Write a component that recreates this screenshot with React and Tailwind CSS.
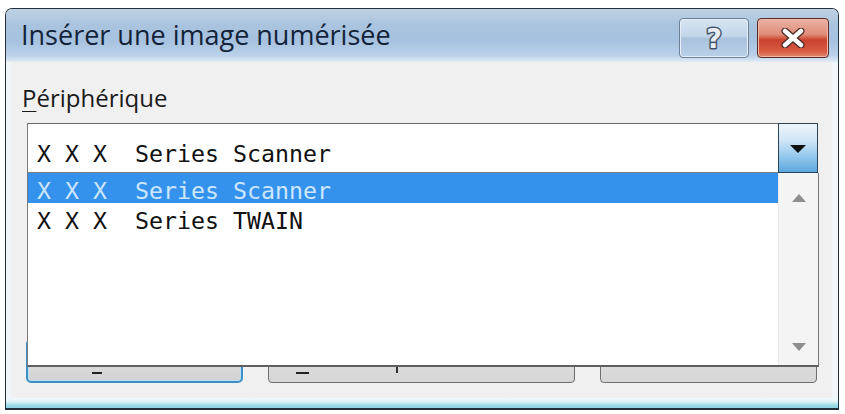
import React from "react";

function Tri({ up, className }) {
  return (
    <svg width="14" height="8" viewBox="0 0 14 8" className={className}>
      {up ? <polygon points="0,8 14,8 7,0" fill="#8e8e8e" /> : <polygon points="0,0 14,0 7,8" fill="#8e8e8e" />}
    </svg>
  );
}

export default function App() {
  const mono = "font-['DejaVu_Sans_Mono',monospace] text-[23.25px]";
  return (
    <div className="w-[845px] h-[414px] bg-white pt-[8px] pl-[5px] overflow-hidden font-['Open_Sans',sans-serif]">
      <div className="w-[834px] h-[402px] border border-b-2 border-[#22303d] rounded-t-[7px] flex flex-col overflow-hidden">
        {/* Title bar */}
        <div className="h-[53px] flex justify-between items-start bg-[linear-gradient(to_bottom,#bfd1e4_0%,#aac4df_30%,#a6c2e0_60%,#bbd1ea_88%,#e3ecf5_100%)]">
          <div className="pl-[15px] pt-[8px] text-[27px] leading-[36px] text-[#13243a]">
            Insérer une image numérisée
          </div>
          <div className="flex gap-[8px] pr-[9px] pt-[9px]">
            <div className="w-[70px] h-[40px] rounded-[4px] border border-[#6c8097] bg-[linear-gradient(to_bottom,#d6e4f1_0%,#c2d6ea_45%,#a9c2dc_52%,#b9d0e8_100%)] shadow-[inset_0_0_0_1px_#e6eef7] flex items-center justify-center">
              <svg width="24" height="30" viewBox="0 0 24 30">
                <text
                  x="12"
                  y="25"
                  textAnchor="middle"
                  fontFamily="DejaVu Sans, sans-serif"
                  fontWeight="bold"
                  fontSize="27"
                  fill="#e8edf3"
                  stroke="#45546a"
                  strokeWidth="3"
                  strokeLinejoin="round"
                  paintOrder="stroke"
                >
                  ?
                </text>
              </svg>
            </div>
            <div className="w-[72px] h-[40px] rounded-[4px] border border-[#5a2b24] bg-[linear-gradient(to_bottom,#eab1a3_0%,#df8e7b_40%,#c9432d_55%,#d65b42_85%,#e08a70_100%)] shadow-[inset_0_0_0_1px_#f0b8aa] flex items-center justify-center">
              <svg width="24" height="20" viewBox="0 0 24 20">
                <path d="M4 3 L20 17 M20 3 L4 17" stroke="#4a2a24" strokeWidth="7" strokeLinecap="round" />
                <path d="M4 3 L20 17 M20 3 L4 17" stroke="#ffffff" strokeWidth="4.5" strokeLinecap="round" />
              </svg>
            </div>
          </div>
        </div>
        {/* Middle */}
        <div className="h-[336px] flex">
          <div className="w-[5px] bg-[#f1f6fb]" />
          <div className="flex-1 bg-[#f0f0f0] flex flex-col">
            <div className="pl-[11px] pt-[20px] text-[24px] leading-[32px] text-[#1a1a1a]">
              <span className="underline decoration-1 underline-offset-[4px]">P</span>ériphérique
            </div>
            {/* Combobox */}
            <div className="ml-[16px] mt-[9px] w-[791px] relative">
              <div className="h-[50px] flex bg-white border-t border-l border-b border-[#7c7c7c] border-t-[#6a6a6a]">
                <div className={`flex-1 pl-[9px] pt-[15px] leading-[30px] text-[#111] whitespace-pre ${mono}`}>
                  X X X  Series Scanner
                </div>
                <div className="w-[40px] -mt-px -mb-px border-[1.5px] border-[#2d4457] bg-[linear-gradient(to_bottom,#eef5fb_0%,#cfe5f6_35%,#8fc6ec_70%,#5ea8de_100%)] flex justify-center pt-[21px]">
                  <svg width="16" height="8" viewBox="0 0 16 8">
                    <polygon points="0,0 16,0 8,8" fill="#111" />
                  </svg>
                </div>
              </div>
              {/* Dropdown list */}
              <div className="absolute left-0 top-[50px] w-[792px] h-[194px] z-10 bg-white border-l border-r border-b-2 border-[#7a7a7a] border-b-[#5f5f5f] flex">
                <div className={`flex-1 ${mono} whitespace-pre`}>
                  <div className="h-[30px] bg-[#3492ec] text-[#cde6ff] pl-[9px] pt-[3px] leading-[30px] overflow-hidden">X X X  Series Scanner</div>
                  <div className="h-[30px] text-[#111] pl-[9px] pt-[3px] leading-[30px] overflow-hidden">X X X  Series TWAIN</div>
                </div>
                <div className="w-[40px] bg-[#f4f4f4] border-l border-[#e8e8e8] flex flex-col items-center justify-between pt-[21px] pb-[14px]">
                  <Tri up />
                  <Tri />
                </div>
              </div>
            </div>
            {/* Buttons */}
            <div className="ml-[15px] mt-[166px] flex gap-[25px]">
              <div className="w-[217px] h-[44px] rounded-[5px] border-2 border-[#3d8fc4] bg-[linear-gradient(to_bottom,#e8e8e8,#d2d2d2)] shadow-[inset_0_0_0_1px_#b5e3f5]">
                <div className="ml-[64px] mt-[31px] w-[10px] h-[2px] bg-[#222]" />
              </div>
              <div className="w-[307px] h-[44px] rounded-[4px] border border-[#6f6f6f] bg-[linear-gradient(to_bottom,#e4e4e4,#d6d6d6)] flex items-start">
                <div className="ml-[27px] mt-[32px] w-[13px] h-[2px] bg-[#222]" />
                <div className="ml-[87px] mt-[27px] w-[2px] h-[6px] bg-[#333]" />
              </div>
              <div className="w-[217px] h-[44px] rounded-[4px] border border-[#6f6f6f] bg-[linear-gradient(to_bottom,#e4e4e4,#d6d6d6)]" />
            </div>
          </div>
          <div className="w-[6px] bg-[#f1f6fb]" />
        </div>
        {/* Bottom frame */}
        <div className="flex-1 bg-[linear-gradient(to_bottom,#f3f8fb_0%,#dff2f6_35%,#97dbe6_75%,#8fd4e0_100%)]" />
      </div>
    </div>
  );
}
